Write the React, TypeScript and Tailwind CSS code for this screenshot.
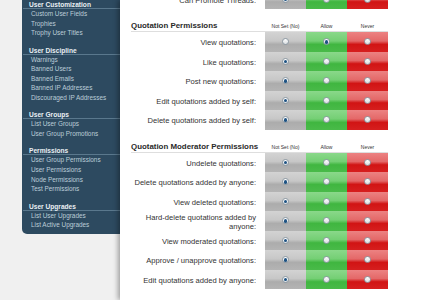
import React from 'react';

const sideGroups = [
  { title: 'User Customization', items: ['Custom User Fields', 'Trophies', 'Trophy User Titles'] },
  { title: 'User Discipline', items: ['Warnings', 'Banned Users', 'Banned Emails', 'Banned IP Addresses', 'Discouraged IP Addresses'] },
  { title: 'User Groups', items: ['List User Groups', 'User Group Promotions'] },
  { title: 'Permissions', items: ['User Group Permissions', 'User Permissions', 'Node Permissions', 'Test Permissions'] },
  { title: 'User Upgrades', items: ['List User Upgrades', 'List Active Upgrades'] },
];

type Choice = 0 | 1 | 2; // not set, allow, never

const basicPerms: { label: string; value: Choice }[] = [
  { label: 'View quotations:', value: 1 },
  { label: 'Like quotations:', value: 0 },
  { label: 'Post new quotations:', value: 0 },
  { label: 'Edit quotations added by self:', value: 0 },
  { label: 'Delete quotations added by self:', value: 0 },
];

const modPerms: { label: string; value: Choice }[] = [
  { label: 'Undelete quotations:', value: 0 },
  { label: 'Delete quotations added by anyone:', value: 0 },
  { label: 'View deleted quotations:', value: 0 },
  { label: 'Hard-delete quotations added by anyone:', value: 0 },
  { label: 'View moderated quotations:', value: 0 },
  { label: 'Approve / unapprove quotations:', value: 0 },
  { label: 'Edit quotations added by anyone:', value: 0 },
];

const cellBg = [
  'bg-[linear-gradient(to_bottom,#d3d3d3_0%,#c7c7c7_45%,#acacac_62%,#b4b4b4_100%)]',
  'bg-[linear-gradient(to_bottom,#8ad88a_0%,#74cf74_45%,#40b640_62%,#49ba49_100%)]',
  'bg-[linear-gradient(to_bottom,#ec8282_0%,#e46868_45%,#d11414_62%,#d61f1f_100%)]',
];

function Radio({ on }: { on: boolean }) {
  return (
    <span className="w-[7px] h-[7px] rounded-full border border-[#8d9aa4] bg-[linear-gradient(to_bottom,#ffffff,#d9dde0)] flex items-center justify-center">
      {on && <span className="w-[3.5px] h-[3.5px] rounded-full bg-[#1d5283]" />}
    </span>
  );
}

function PermRow({ label, value }: { label: string; value: Choice }) {
  return (
    <div className="flex h-[19.5px]">
      <div className="w-[145px] pl-[6px] pr-[9px] pt-[2px] flex items-center justify-end text-right text-[7.6px] leading-[9px] text-[#333]">
        {label}
      </div>
      {[0, 1, 2].map((i) => (
        <div key={i} className={`w-[41px] flex items-center justify-center ${cellBg[i]}`}>
          <Radio on={value === i} />
        </div>
      ))}
    </div>
  );
}

function SectionHead({ title }: { title: string }) {
  return (
    <div className="mt-[12px] ml-[11px] w-[257px] h-[11px] flex items-start border-b border-[#dedede]">
      <div className="flex-1 font-bold text-[7.9px] leading-[10px] text-[#2a2a2a] whitespace-nowrap">{title}</div>
      <div className="w-[41px] text-center text-[5px] leading-[10px] text-[#333] whitespace-nowrap">Not Set (No)</div>
      <div className="w-[41px] text-center text-[5px] leading-[10px] text-[#333]">Allow</div>
      <div className="w-[41px] text-center text-[5px] leading-[10px] text-[#333]">Never</div>
    </div>
  );
}

export default function App() {
  return (
    <div className="w-[424px] h-[300px] overflow-hidden bg-[#f0f0f0] flex font-['Liberation_Sans',Arial,sans-serif]">
      <div className="w-[22px] shrink-0" />

      {/* sidebar */}
      <div className="w-[98px] shrink-0 self-start bg-[#2d4a60] rounded-bl-[5px] pb-[4px]">
        {sideGroups.map((g, gi) => (
          <div key={g.title} className={gi === 0 ? '' : 'mt-[7.8px]'}>
            <div className="ml-[1px] pl-[6px] h-[9px] leading-[9px] text-[6.6px] font-bold text-[#eaf0f4] border-b border-[#5a788d] whitespace-nowrap">
              {g.title}
            </div>
            {g.items.map((it) => (
              <div key={it} className="pl-[9px] h-[9.6px] leading-[9.6px] text-[6.4px] text-[#bccdd8] whitespace-nowrap">
                {it}
              </div>
            ))}
          </div>
        ))}
      </div>

      {/* content */}
      <div className="flex-1 bg-white shadow-[-2px_0_5px_rgba(0,0,0,0.35)] relative">
        <div className="-mt-[10.5px]">
          <PermRow label="Can Promote Threads:" value={0} />

          <SectionHead title="Quotation Permissions" />
          {basicPerms.map((p) => (
            <PermRow key={p.label} label={p.label} value={p.value} />
          ))}

          <SectionHead title="Quotation Moderator Permissions" />
          {modPerms.map((p) => (
            <PermRow key={p.label} label={p.label} value={p.value} />
          ))}
        </div>
      </div>
    </div>
  );
}
